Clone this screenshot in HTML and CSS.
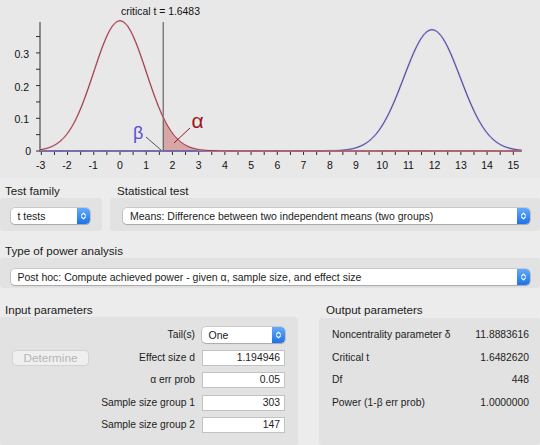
FILE: index.html
```html
<!DOCTYPE html>
<html>
<head>
<meta charset="utf-8">
<link rel="stylesheet" href="styles.css">
</head>
<body>
<div class="chart">
  <svg class="plot" width="540" height="178" viewBox="0 0 540 178">
    <text class="ttl" x="160.5" y="15" text-anchor="middle">critical t = 1.6483</text>
    <path id="alpha" class="afill" d=""></path>
    <line class="axis" x1="40" y1="22" x2="40" y2="151.5"></line>
    <line class="axis" x1="40" y1="151" x2="522" y2="151"></line>
    <path id="xt" class="axis" d=""></path>
    <path id="yt" class="axis" d=""></path>
    <line class="crit" x1="163.2" y1="22" x2="163.2" y2="151"></line>
    <path id="b1" class="bhalo" d=""></path>
    <path id="b2" class="bline" d=""></path>
    <path id="r1" class="rhalo" d=""></path>
    <path id="r2" class="rline" d=""></path>
    <g class="ylab" text-anchor="end">
      <text x="29" y="57.8">0.3</text>
      <text x="29" y="90.5">0.2</text>
      <text x="29" y="123.2">0.1</text>
      <text x="31" y="154.9">0</text>
    </g>
    <g class="xlab" text-anchor="middle">
      <text x="40.6" y="169">-3</text>
      <text x="67" y="169">-2</text>
      <text x="93.2" y="169">-1</text>
      <text x="120" y="169">0</text>
      <text x="146.2" y="169">1</text>
      <text x="172.4" y="169">2</text>
      <text x="198.7" y="169">3</text>
      <text x="224.9" y="169">4</text>
      <text x="251.1" y="169">5</text>
      <text x="277.3" y="169">6</text>
      <text x="303.5" y="169">7</text>
      <text x="329.8" y="169">8</text>
      <text x="356" y="169">9</text>
      <text x="382.2" y="169">10</text>
      <text x="408.4" y="169">11</text>
      <text x="434.6" y="169">12</text>
      <text x="460.9" y="169">13</text>
      <text x="487.1" y="169">14</text>
      <text x="513.3" y="169">15</text>
    </g>
    <line class="bptr" x1="146" y1="137" x2="161" y2="150"></line>
    <line class="aptr" x1="190" y1="128" x2="174" y2="143"></line>
    <text class="beta" x="133" y="139">β</text>
    <text class="alph" x="191.5" y="128">α</text>
  </svg>
</div>

<div class="toprow">
  <div class="group fam">
    <div class="glabel">Test family</div>
    <div class="panel p-fam">
      <div class="select"><span class="sv">t tests</span><span class="step"><svg width="7" height="10" viewBox="0 0 7 10"><path d="M1.5 4.2 L3.5 2.2 L5.5 4.2 M1.5 5.8 L3.5 7.8 L5.5 5.8"></path></svg></span></div>
    </div>
  </div>
  <div class="group stat">
    <div class="glabel gl-stat">Statistical test</div>
    <div class="panel p-stat">
      <div class="select"><span class="sv sv-stat">Means: Difference between two independent means (two groups)</span><span class="step"><svg width="7" height="10" viewBox="0 0 7 10"><path d="M1.5 4.2 L3.5 2.2 L5.5 4.2 M1.5 5.8 L3.5 7.8 L5.5 5.8"></path></svg></span></div>
    </div>
  </div>
</div>

<div class="group type">
  <div class="glabel gl-type">Type of power analysis</div>
  <div class="panel p-type">
    <div class="select"><span class="sv">Post hoc: Compute achieved power - given α, sample size, and effect size</span><span class="step"><svg width="7" height="10" viewBox="0 0 7 10"><path d="M1.5 4.2 L3.5 2.2 L5.5 4.2 M1.5 5.8 L3.5 7.8 L5.5 5.8"></path></svg></span></div>
  </div>
</div>

<div class="paramrow">
  <div class="group input">
    <div class="glabel gl-par">Input parameters</div>
    <div class="panel p-in">
      <span></span>
      <span class="lab">Tail(s)</span>
      <div class="select"><span class="sv">One</span><span class="step"><svg width="7" height="10" viewBox="0 0 7 10"><path d="M1.5 4.2 L3.5 2.2 L5.5 4.2 M1.5 5.8 L3.5 7.8 L5.5 5.8"></path></svg></span></div>

      <div class="btn">Determine</div>
      <span class="lab">Effect size d</span>
      <div class="field">1.194946</div>

      <span></span>
      <span class="lab">α err prob</span>
      <div class="field">0.05</div>

      <span></span>
      <span class="lab">Sample size group 1</span>
      <div class="field">303</div>

      <span></span>
      <span class="lab">Sample size group 2</span>
      <div class="field">147</div>
    </div>
  </div>
  <div class="group output">
    <div class="glabel gl-par gl-out">Output parameters</div>
    <div class="panel p-out">
      <span class="olab">Noncentrality parameter δ</span><span class="oval">11.8883616</span>
      <span class="olab">Critical t</span><span class="oval">1.6482620</span>
      <span class="olab">Df</span><span class="oval">448</span>
      <span class="olab">Power (1-β err prob)</span><span class="oval">1.0000000</span>
    </div>
  </div>
</div>
<script src="script.js"></script>
</body>
</html>
```

FILE: styles.css
```css
html, body {
  margin: 0;
  padding: 0;
}
body {
  width: 540px;
  height: 445px;
  overflow: hidden;
  background: #ececec;
  font-family: "Liberation Sans", Arial, sans-serif;
  color: #1d1d1d;
}
.chart {
  height: 178px;
  background: #e8e8e8;
}
.plot {
  display: block;
  font-family: "Liberation Sans", Arial, sans-serif;
}
.ttl { font-size: 10.4px; fill: #111; }
.ylab, .xlab { font-size: 10.5px; fill: #111; }
.axis { stroke: #2e2e2e; stroke-width: 1; fill: none; }
.crit { stroke: #4a4a4a; stroke-width: 1; }
.afill { fill: #d9a6a8; stroke: none; }
.rhalo { fill: none; stroke: #eaa3ab; stroke-width: 2; opacity: 0.7; }
.rline { fill: none; stroke: #7a2636; stroke-width: 0.9; }
.bhalo { fill: none; stroke: #aaa2e6; stroke-width: 2; opacity: 0.7; }
.bline { fill: none; stroke: #3d3482; stroke-width: 0.9; }
.bptr { stroke: #555; stroke-width: 1; }
.aptr { stroke: #8c1a22; stroke-width: 1; }
.beta { font-size: 18px; fill: #5a50d4; }
.alph { font-size: 21px; fill: #a0151a; }

.glabel {
  font-size: 11.6px;
  line-height: 14px;
  padding: 6px 0 0 5px;
  color: #1a1a1a;
}
.gl-stat { padding-left: 7px; }
.gl-type { padding-top: 13px; }
.gl-par { padding-top: 15px; }
.gl-out { padding-left: 7px; }

.panel {
  background: #e2e2e2;
  border-radius: 3px;
  box-sizing: border-box;
}
.toprow {
  display: flex;
  gap: 8px;
}
.fam { width: 102px; }
.stat { flex: 1; }
.p-fam {
  height: 33px;
  padding: 10px 12px 0 11px;
}
.p-stat {
  height: 33px;
  padding: 10px 10px 0 13px;
}
.p-type {
  height: 30px;
  padding: 11px 10px 0 11px;
}

.select {
  display: flex;
  height: 16px;
  background: #fff;
  border-radius: 4px;
  box-shadow: 0 0 0 0.6px rgba(0,0,0,0.22), 0 1px 1px rgba(0,0,0,0.16);
  font-size: 10.5px;
  line-height: 16px;
  color: #1b1b1b;
  overflow: hidden;
}
.sv {
  padding-left: 6.5px;
  white-space: nowrap;
  flex: 1;
  overflow: hidden;
}
.sv-stat { padding-left: 7px; }
.step {
  width: 13px;
  flex: none;
  background: linear-gradient(#65aafb, #1c73e6);
  border-radius: 0 4px 4px 0;
  display: flex;
  align-items: center;
  justify-content: center;
}
.step path {
  fill: none;
  stroke: #fff;
  stroke-width: 1.2;
  stroke-linecap: round;
  stroke-linejoin: round;
}

.paramrow {
  display: flex;
}
.input { width: 298px; }
.output { flex: 1; margin-left: 21px; }
.p-in {
  height: 128px;
  padding: 10px 13px 0 12px;
  display: grid;
  grid-template-columns: 77px 99px 83px;
  grid-auto-rows: 16px;
  column-gap: 7px;
  row-gap: 6.5px;
}
.lab {
  font-size: 10.3px;
  line-height: 16px;
  text-align: right;
  white-space: nowrap;
}
.field {
  background: #fff;
  border: 1px solid #c2c2c2;
  box-sizing: border-box;
  height: 16px;
  font-size: 10.4px;
  line-height: 14px;
  text-align: right;
  padding-right: 4px;
}
.btn {
  box-sizing: border-box;
  height: 16px;
  border: 1px solid #d3d3d3;
  border-radius: 4px;
  background: #efefef;
  color: #b6b6b6;
  font-size: 11.7px;
  line-height: 14px;
  text-align: center;
}
.p-out {
  height: 127px;
  margin-top: 1px;
  padding: 9px 11px 0 13px;
  display: grid;
  grid-template-columns: 1fr auto;
  grid-auto-rows: 16px;
  row-gap: 6.5px;
}
.olab, .oval {
  font-size: 10.3px;
  line-height: 16px;
  white-space: nowrap;
}
.oval { text-align: right; }
```

FILE: script.js
```js
(function () {
  var X = function (t) { return 120 + 26.22 * t; };
  var Y = function (d) { return 151 - 327 * d; };
  var norm = function (t, m, s) {
    return Math.exp(-0.5 * Math.pow((t - m) / s, 2)) / (s * Math.sqrt(2 * Math.PI));
  };
  function curve(m, s) {
    var d = '';
    for (var t = -3.05; t <= 15.31; t += 0.04) {
      d += (d ? 'L' : 'M') + X(t).toFixed(2) + ' ' + Y(norm(t, m, s)).toFixed(2);
    }
    return d;
  }
  var red = curve(0, 1.0022);
  var blue = curve(11.9, 1.076);
  document.getElementById('r1').setAttribute('d', red);
  document.getElementById('r2').setAttribute('d', red);
  document.getElementById('b1').setAttribute('d', blue);
  document.getElementById('b2').setAttribute('d', blue);

  var c = 1.6483;
  var a = 'M' + X(c).toFixed(2) + ' 151';
  for (var t = c; t <= 5; t += 0.04) {
    a += 'L' + X(t).toFixed(2) + ' ' + Y(norm(t, 0, 1.0022)).toFixed(2);
  }
  a += 'L' + X(5).toFixed(2) + ' 151Z';
  document.getElementById('alpha').setAttribute('d', a);

  var xt = '';
  for (var k = 0; k <= 36; k++) {
    var x = X(-3 + 0.5 * k);
    xt += 'M' + x.toFixed(2) + ' 151v4';
  }
  document.getElementById('xt').setAttribute('d', xt);

  var yt = '';
  for (var j = 0; j <= 7; j++) {
    var y = Y(0.05 * j);
    yt += 'M36 ' + y.toFixed(2) + 'H40';
  }
  document.getElementById('yt').setAttribute('d', yt);
})();
```
